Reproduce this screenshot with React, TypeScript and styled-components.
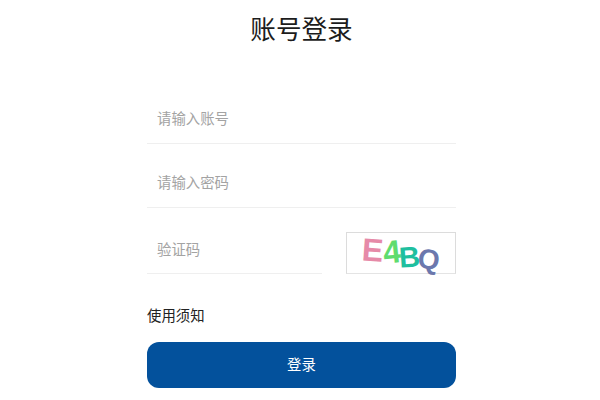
import React from "react";
import styled, { createGlobalStyle } from "styled-components";

const Global = createGlobalStyle`
  html, body { margin: 0; padding: 0; background: #fff; }
  body { font-family: "Noto Sans CJK SC", "Noto Sans", sans-serif; width: 600px; height: 400px; overflow: hidden; }
`;

const Page = styled.main`
  width: 309px;
  margin-left: 147px;
  display: flex;
  flex-direction: column;
`;

const Title = styled.h1`
  margin: 9px 0 0;
  height: 38px;
  line-height: 38px;
  font-size: 25.6px;
  font-weight: 400;
  color: #1c1c1c;
  text-align: center;
  white-space: nowrap;
`;

const Field = styled.div<{ $top: number }>`
  margin-top: ${(p) => p.$top}px;
  height: 36px;
  padding: 0 0 8px 10px;
  border-bottom: 1px solid #efefef;
  display: flex;
  align-items: center;
`;

const Input = styled.input`
  border: 0;
  outline: 0;
  padding: 0;
  width: 100%;
  height: 22px;
  font: inherit;
  font-size: 14.4px;
  color: #333;
  background: transparent;
  &::placeholder { color: #a3a3a3; opacity: 1; }
`;

const CaptchaRow = styled.div`
  margin-top: 24px;
  display: flex;
  justify-content: space-between;
  align-items: flex-end;
`;

const CaptchaField = styled(Field)`
  width: 165px;
  height: 32px;
  padding-bottom: 9px;
`;

const CaptchaImage = styled.div`
  position: relative;
  width: 108px;
  height: 40px;
  border: 1px solid #dcdcdc;
  border-bottom-color: #e4e4e4;
  background: #fff;
`;

const CaptchaChar = styled.span<{ $x: number; $y: number; $size: number; $color: string; $rot: number }>`
  position: absolute;
  left: ${(p) => p.$x}px;
  top: ${(p) => p.$y}px;
  font-family: "Liberation Sans", sans-serif;
  font-size: ${(p) => p.$size}px;
  line-height: 1;
  font-weight: 700;
  color: ${(p) => p.$color};
  transform: rotate(${(p) => p.$rot}deg);
`;

const Notice = styled.a`
  margin-top: 30px;
  height: 22px;
  line-height: 22px;
  font-size: 14.4px;
  color: #222;
`;

const Submit = styled.button`
  margin-top: 16px;
  height: 46px;
  padding: 0 0 4px;
  border: 0;
  border-radius: 12px;
  background: #03519c;
  color: #fff;
  font: inherit;
  font-size: 14.4px;
  cursor: pointer;
`;

export default function App() {
  return (
    <>
      <Global />
      <Page>
        <Title>账号登录</Title>
        <Field $top={52}>
          <Input placeholder="请输入账号" />
        </Field>
        <Field $top={19}>
          <Input placeholder="请输入密码" />
        </Field>
        <CaptchaRow>
          <CaptchaField $top={0}>
            <Input placeholder="验证码" />
          </CaptchaField>
          <CaptchaImage>
            <CaptchaChar $x={15} $y={1} $size={32} $color="#e68aa8" $rot={4}>E</CaptchaChar>
            <CaptchaChar $x={36} $y={3} $size={32} $color="#5fdc6e" $rot={-6}>4</CaptchaChar>
            <CaptchaChar $x={52} $y={10} $size={29} $color="#1fbf9f" $rot={-4}>B</CaptchaChar>
            <CaptchaChar $x={71} $y={13} $size={28} $color="#6c78ad" $rot={6}>Q</CaptchaChar>
          </CaptchaImage>
        </CaptchaRow>
        <Notice>使用须知</Notice>
        <Submit>登录</Submit>
      </Page>
    </>
  );
}
